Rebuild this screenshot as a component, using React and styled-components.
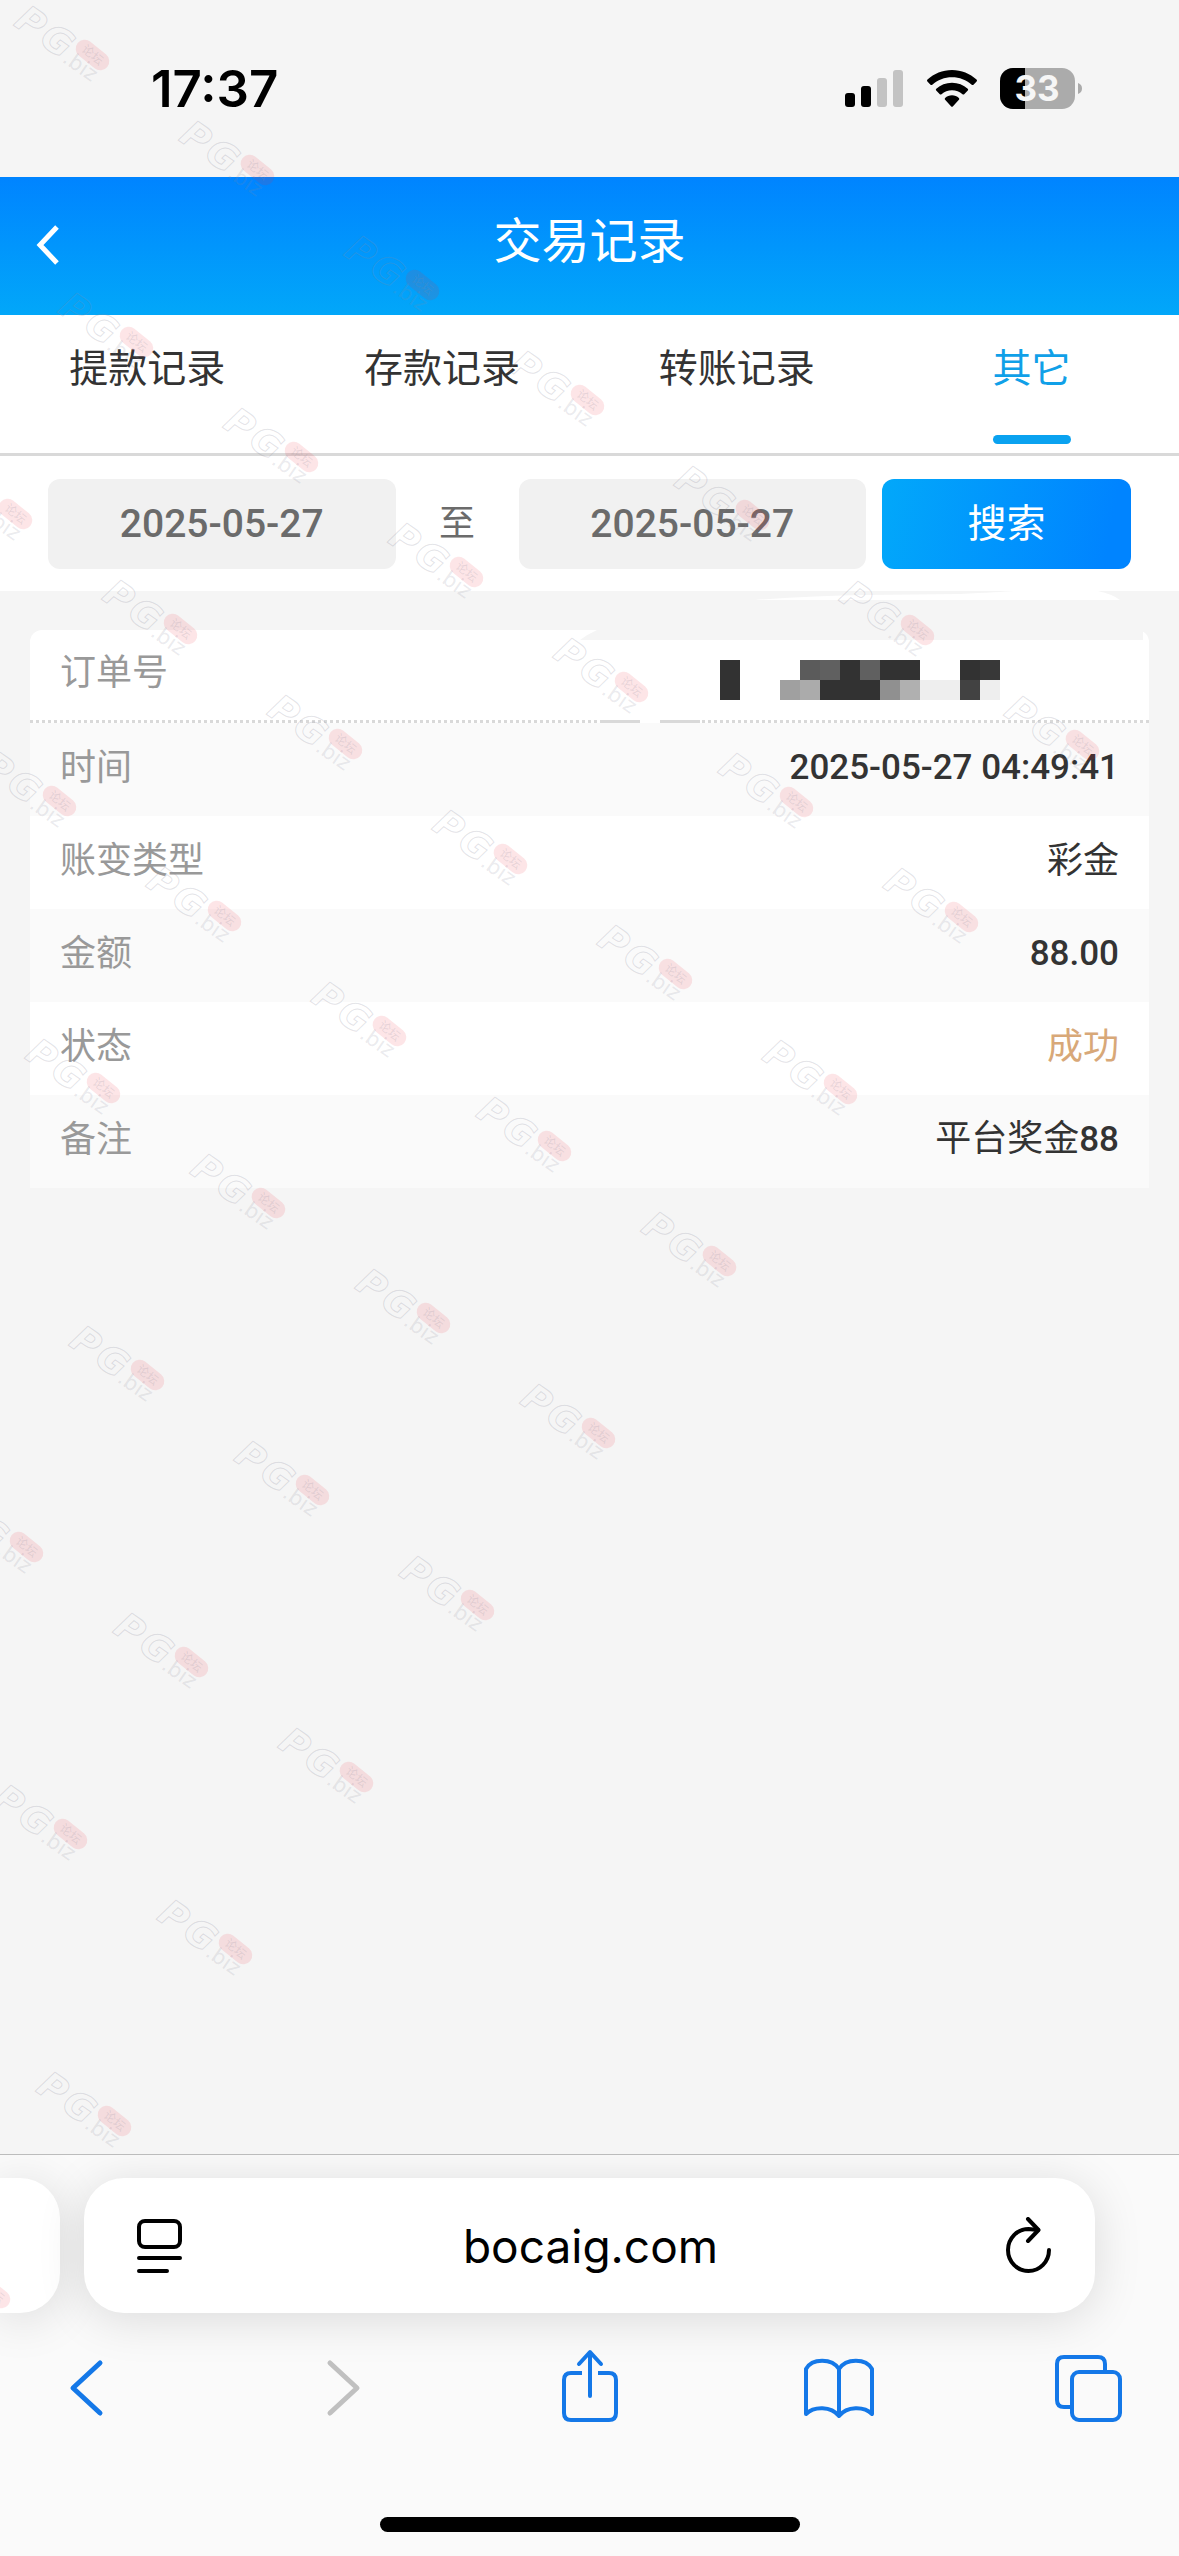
import React, { useState } from 'react';
import styled, { createGlobalStyle, css } from 'styled-components';

const GlobalStyle = createGlobalStyle`
  *, *::before, *::after {
    box-sizing: border-box;
  }
  body {
    margin: 0;
    background: #f5f5f5;
    font-family: Roboto, 'Noto Sans CJK SC', sans-serif;
    color: #333;
  }
  button, input {
    margin: 0;
    padding: 0;
    border: 0;
    background: none;
    font: inherit;
    color: inherit;
  }
  svg {
    display: block;
  }
`;

const Page = styled.div`
  position: relative;
  min-height: 100vh;
  display: flex;
  flex-direction: column;
  overflow: hidden;
`;

const StatusBar = styled.div`
  height: 177px;
  padding: 0 97px 0 151px;
  display: flex;
  align-items: center;
  justify-content: space-between;
  font-family: Inter, sans-serif;
  color: #000;
`;

const Time = styled.span`
  font-size: 51px;
  line-height: 60px;
  font-weight: 600;
`;

const StatusIcons = styled.div`
  display: flex;
  align-items: center;
  gap: 23px;
`;

const Header = styled.header`
  height: 138px;
  padding: 0 36px;
  display: grid;
  grid-template-columns: 1fr auto 1fr;
  align-items: center;
  background: linear-gradient(#0084ff, #02a7f9);
  color: #fff;
`;

const BackButton = styled.button`
  justify-self: start;
  padding-bottom: 3px;
`;

const Title = styled.h1`
  margin: 0;
  padding-bottom: 8px;
  font-size: 48px;
  line-height: 72px;
  font-weight: 400;
`;

const Tabs = styled.nav`
  display: grid;
  grid-template-columns: repeat(4, 1fr);
  border-bottom: 3px solid #d9d9d9;
  background: #fff;
`;

const Tab = styled.button`
  height: 138px;
  padding: 24px 0 9px;
  display: flex;
  flex-direction: column;
  align-items: center;
  justify-content: space-between;
  font-size: 39px;
  line-height: 60px;
  color: ${({ $active }) => ($active ? '#10a0e8' : '#333')};

  &::after {
    content: '';
    width: 78px;
    height: 9px;
    border-radius: 5px;
    background: ${({ $active }) => ($active ? '#0aa2f0' : 'transparent')};
  }
`;

const SearchBar = styled.form`
  padding: 23px 48px 22px;
  display: flex;
  align-items: center;
  background: #fff;
  color: #6b6b6b;
`;

const DateInput = styled.input`
  flex: 1;
  min-width: 0;
  height: 90px;
  border-radius: 12px;
  background: #f1f1f1;
  font-size: 39px;
  font-weight: 500;
  text-align: center;
`;

const Until = styled.span`
  width: 123px;
  font-size: 36px;
  line-height: 60px;
  text-align: center;
`;

const SearchButton = styled.button`
  width: 249px;
  height: 90px;
  margin-left: 16px;
  border-radius: 12px;
  background: linear-gradient(100deg, #02a8fa, #0084ff 90%);
  font-size: 39px;
  line-height: 60px;
  color: #fff;
`;

const Content = styled.main`
  position: relative;
  flex: 1;
  padding: 39px 30px;
`;

const Card = styled.dl`
  margin: 0;
  border-radius: 12px 12px 0 0;
  background: #fff;
  overflow: hidden;
`;

const Row = styled.div`
  height: 93px;
  padding: 0 30px 4px;
  display: flex;
  align-items: center;
  justify-content: space-between;
  font-size: 36px;
  line-height: 54px;

  &:nth-child(even) {
    background: #fafafa;
  }

  &:first-child {
    border-bottom: 3px dotted #d9d9d9;
  }
`;

const Label = styled.dt`
  color: #999;
`;

const Value = styled.dd`
  margin: 0;
  color: ${({ $success }) => ($success ? '#d8a878' : '#333')};
`;

const Digits = styled.span`
  font-size: 35px;
  font-weight: 500;
`;

const overlay = css`
  position: absolute;
  top: 0;
  left: 0;
  pointer-events: none;
`;

const Smudges = styled.svg`
  ${overlay}
`;

const Watermarks = styled.svg`
  ${overlay}
  width: 100%;
  height: 100%;
`;

const Browser = styled.footer`
  border-top: 1px solid #bcbcbc;
  background: #fafafa;
  overflow: hidden;
`;

const AddressRow = styled.div`
  padding: 23px 84px 0 0;
  display: flex;
  gap: 24px;
`;

const bar = css`
  height: 135px;
  background: #fff;
  box-shadow: 0 6px 48px rgba(0, 0, 0, 0.13);
`;

const PreviousTab = styled.div`
  ${bar}
  width: 60px;
  border-radius: 0 40px 40px 0;
`;

const AddressBar = styled.div`
  ${bar}
  flex: 1;
  padding: 0 43px 0 51px;
  display: flex;
  align-items: center;
  border-radius: 40px;
`;

const AddressInput = styled.input`
  flex: 1;
  min-width: 0;
  padding-right: 8px;
  font-family: Inter, sans-serif;
  font-size: 46px;
  line-height: 60px;
  text-align: center;
  color: #000;
`;

const Toolbar = styled.div`
  padding: 36px 53px 0 51px;
  display: flex;
  justify-content: space-between;
  color: #1478e8;
`;

const ToolButton = styled.button`
  color: ${({ disabled }) => (disabled ? '#c0c0c0' : 'inherit')};
`;

const HomeIndicator = styled.div`
  width: 420px;
  height: 15px;
  margin: 92px auto 24px;
  border-radius: 8px;
  background: #000;
`;

const SignalIcon = () => (
  <svg width="59" height="38" viewBox="0 0 59 38">
    <rect x="0" y="23" width="10" height="14" rx="3" />
    <rect x="16" y="16" width="10" height="21" rx="3" />
    <rect x="32" y="8" width="10" height="29" rx="3" fill="#c3c3c3" />
    <rect x="48" y="0" width="10" height="37" rx="3" fill="#c3c3c3" />
  </svg>
);

const WifiIcon = () => (
  <svg width="50" height="38" viewBox="0 0 50 38">
    <path d="M25 0C34.500 0 43 3.600 49.500 9.600Q50.500 10.600 49.600 11.500L46.500 14.700Q45.600 15.500 44.700 14.700C39.300 9.800 32.500 7.200 25 7.200S10.700 9.800 5.300 14.700Q4.400 15.500 3.500 14.700L.4 11.500Q-.5 10.600 .5 9.600C7 3.600 15.500 0 25 0Z" />
    <path d="M25 12.800C31 12.800 36.500 15 40.700 18.800Q41.700 19.700 40.800 20.600L37.200 24.200Q36.400 25 35.500 24.200C32.600 21.600 29 20.200 25 20.200S17.400 21.600 14.500 24.200Q13.600 25 12.800 24.200L9.200 20.600Q8.300 19.700 9.300 18.800C13.500 15 19 12.800 25 12.800Z" />
    <path d="M25 25.300C27.600 25.300 30 26.300 31.900 27.900Q32.800 28.800 31.900 29.700L26 36.300Q25 37.400 24 36.300L18.100 29.700Q17.200 28.800 18.100 27.900C20 26.300 22.400 25.300 25 25.300Z" />
  </svg>
);

const BatteryIcon = () => (
  <svg width="82" height="42" viewBox="0 0 82 42">
    <clipPath id="charge">
      <rect width="25" height="42" />
    </clipPath>
    <rect width="75" height="41" rx="13" fill="#ababab" />
    <rect width="75" height="41" rx="13" clipPath="url(#charge)" />
    <path d="M78 15C81 16 82 18 82 20.500S81 25 78 26Z" fill="#ababab" />
    <text x="37" y="33" textAnchor="middle" fontSize="35" fontWeight="700" fill="#f6f6f6">
      33
    </text>
  </svg>
);

const MOSAIC = [
  ['#323232', 0, 0, 0, '#5b5b5b', '#606060', '#323232', '#606060', '#323232', '#323232', 0, 0, '#323232', '#383838'],
  ['#323232', 0, 0, '#a0a0a0', '#ababab', '#323232', '#323232', '#323232', '#909090', '#b0b0b0', '#eee', '#eee', '#424242', '#eee'],
];

const HiddenNumber = styled.svg`
  margin: 14px 119px 0 0;
`;

const Mosaic = () => (
  <HiddenNumber width="280" height="40" shapeRendering="crispEdges">
    {MOSAIC.map((line, y) =>
      line.map(
        (fill, x) =>
          fill && (
            <rect key={`${x}-${y}`} x={x * 20} y={y * 20} width="20" height="20" fill={fill} />
          )
      )
    )}
  </HiddenNumber>
);

const TABS = ['提款记录', '存款记录', '转账记录', '其它'];

const RECORD = [
  { label: '订单号', value: <Mosaic /> },
  { label: '时间', value: <Digits>2025-05-27 04:49:41</Digits> },
  { label: '账变类型', value: '彩金' },
  { label: '金额', value: <Digits>88.00</Digits> },
  { label: '状态', value: '成功', success: true },
  {
    label: '备注',
    value: (
      <>
        平台奖金<Digits>88</Digits>
      </>
    ),
  },
];

// Diagonal lattice of marks, cut off along the i + j = 6 line
const MARKS = [];
for (let j = 0; j < 10; j += 1) {
  for (let i = -3; i + j <= 6; i += 1) {
    const x = 14 + i * 165 + j * 44;
    const y = 5 + i * 115 + j * 287;
    if (x > -100 && y > -20) MARKS.push({ x, y });
  }
}

const Watermark = ({ x, y }) => (
  <g transform={`translate(${x} ${y}) rotate(35)`}>
    <g
      fill="none"
      stroke="#8a8a9a"
      strokeOpacity="0.24"
      fontFamily="DejaVu Sans"
      fontSize="37"
      fontWeight="700"
      fontStyle="italic"
    >
      <text x="10" y="17">P</text>
      <text x="41" y="17">G</text>
    </g>
    <text x="71" y="19" fontFamily="DejaVu Sans" fontSize="21" fill="#8a8a9a" fillOpacity="0.18">
      .biz
    </text>
    <g transform="rotate(4 93 -4)">
      <rect x="74" y="-13" width="38" height="18" rx="9" fill="#f02838" fillOpacity="0.12" />
      <text x="81" y="0" fontFamily="Noto Sans CJK SC" fontSize="12" fill="#8a8a9a" fillOpacity="0.2">
        论坛
      </text>
    </g>
  </g>
);

const App = () => {
  const [active, setActive] = useState('其它');

  return (
    <>
      <GlobalStyle />
      <Page>
        <StatusBar>
          <Time>17:37</Time>
          <StatusIcons>
            <SignalIcon />
            <WifiIcon />
            <BatteryIcon />
          </StatusIcons>
        </StatusBar>

        <Header>
          <BackButton aria-label="返回">
            <svg width="24" height="40" viewBox="0 0 24 40" fill="none" stroke="#fff" strokeWidth="5">
              <path d="M21 2L4 20L21 38" />
            </svg>
          </BackButton>
          <Title>交易记录</Title>
        </Header>

        <Tabs>
          {TABS.map(tab => (
            <Tab key={tab} $active={tab === active} onClick={() => setActive(tab)}>
              {tab}
            </Tab>
          ))}
        </Tabs>

        <SearchBar onSubmit={e => e.preventDefault()}>
          <DateInput aria-label="开始日期" defaultValue="2025-05-27" />
          <Until>至</Until>
          <DateInput aria-label="结束日期" defaultValue="2025-05-27" />
          <SearchButton type="submit">搜索</SearchButton>
        </SearchBar>

        <Content>
          <Card>
            {RECORD.map(({ label, value, success }) => (
              <Row key={label}>
                <Label>{label}</Label>
                <Value $success={success}>{value}</Value>
              </Row>
            ))}
          </Card>
          <Smudges width="1179" height="140" viewBox="0 0 1179 140">
            <path d="M755 9C830 3 900 4 960 3Q1000 1 1015 0H1098Q1112 3 1120 9Z" fill="#fff" />
            <path d="M580 49Q588 43 597 39V38H1152V46Q1149 41 1143 39V49Z" fill="#f5f5f5" />
            <path d="M600 129H640V132H600ZM660 129H700V132H660Z" fill="#d9d9d9" />
            <path d="M640 129H660V132H640Z" fill="#fff" />
          </Smudges>
        </Content>

        <Browser>
          <AddressRow>
            <PreviousTab />
            <AddressBar>
              <button aria-label="页面设置">
                <svg width="48" height="56" viewBox="0 0 48 56" fill="none" stroke="#000" strokeWidth="4" strokeLinecap="round">
                  <rect x="4" y="3" width="41" height="26" rx="6" />
                  <path d="M4 40H45M4 53H32" />
                </svg>
              </button>
              <AddressInput aria-label="网址" defaultValue="bocaig.com" />
              <button aria-label="刷新">
                <svg width="46" height="58" viewBox="0 0 46 58" fill="none" stroke="#000" strokeWidth="4" strokeLinecap="round" strokeLinejoin="round">
                  <path d="M43 33A20.500 21 0 1 1 22.500 12L32 13" />
                  <path d="M22 2L32.500 13L22 24" />
                </svg>
              </button>
            </AddressBar>
          </AddressRow>
          <Toolbar>
            <ToolButton aria-label="后退">
              <svg width="72" height="76" viewBox="0 0 72 76" fill="none" stroke="currentColor" strokeWidth="5" strokeLinecap="round" strokeLinejoin="round">
                <path d="M49 14L22 39L49 64" />
              </svg>
            </ToolButton>
            <ToolButton aria-label="前进" disabled>
              <svg width="72" height="76" viewBox="0 0 72 76" fill="none" stroke="currentColor" strokeWidth="5" strokeLinecap="round" strokeLinejoin="round">
                <path d="M28 14L55 39L28 64" />
              </svg>
            </ToolButton>
            <ToolButton aria-label="分享">
              <svg width="72" height="76" viewBox="0 0 72 76" fill="none" stroke="currentColor" strokeWidth="4" strokeLinecap="round" strokeLinejoin="round">
                <path d="M29 24H18Q11 24 11 31V64Q11 71 18 71H56Q63 71 63 64V31Q63 24 56 24H45" strokeLinecap="butt" />
                <path d="M37 47V4M26 15L37 3L48 15" />
              </svg>
            </ToolButton>
            <ToolButton aria-label="书签">
              <svg width="72" height="76" viewBox="0 0 72 76" fill="none" stroke="currentColor" strokeWidth="4" strokeLinecap="round" strokeLinejoin="round">
                <path d="M36 67V20C29 9 9 9 3 20V65C11 57 28 57 36 67C44 57 61 57 69 65V20C63 9 43 9 36 20" />
              </svg>
            </ToolButton>
            <ToolButton aria-label="标签页">
              <svg width="72" height="76" viewBox="0 0 72 76" fill="none" stroke="currentColor" strokeWidth="4">
                <path d="M17 58H10Q3 58 3 51V15Q3 8 10 8H44Q51 8 51 15V23" />
                <rect x="18" y="23" width="48" height="48" rx="7" />
              </svg>
            </ToolButton>
          </Toolbar>
          <HomeIndicator />
        </Browser>

        <Watermarks aria-hidden="true">
          {MARKS.map(({ x, y }) => (
            <Watermark key={`${x},${y}`} x={x} y={y} />
          ))}
        </Watermarks>
      </Page>
    </>
  );
};

export default App;
